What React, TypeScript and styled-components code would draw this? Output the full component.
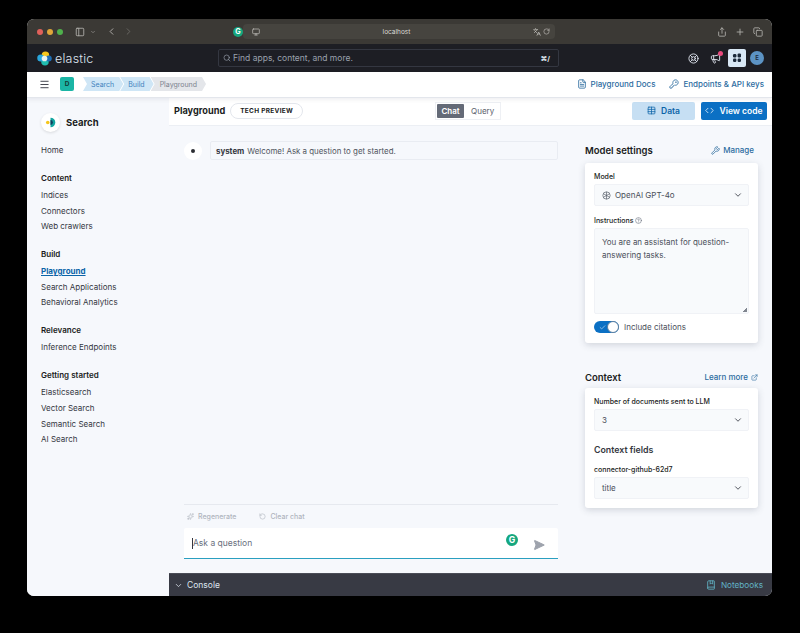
import React from "react";
import styled, { createGlobalStyle } from "styled-components";
import {
  BookMarked,
  ChevronDown,
  ChevronLeft,
  ChevronRight,
  Code,
  Copy,
  ExternalLink,
  FileText,
  Search as SearchIcon,
  HelpCircle,
  KeyRound,
  LifeBuoy,
  Megaphone,
  Menu,
  PanelLeft,
  Plus,
  RotateCw,
  RotateCcw,
  Languages,
  Share,
  SendHorizontal,
  Sparkles,
  Table,
  Wrench,
  Check,
  Monitor,
} from "lucide-react";

const GlobalStyle = createGlobalStyle`
  html, body {
    margin: 0;
    padding: 0;
    background: #000;
    font-family: Inter, "Liberation Sans", sans-serif;
    -webkit-font-smoothing: antialiased;
  }
`;

const Page = styled.div`
  width: 800px;
  height: 633px;
  box-sizing: border-box;
  padding: 19px 28px 37px 27px;
  background: #000;
  overflow: hidden;
`;

const Window = styled.div`
  height: 100%;
  display: flex;
  flex-direction: column;
  border-radius: 7px;
  overflow: hidden;
  background: #f6f8fc;
`;

const BrowserBar = styled.div`
  height: 25px;
  flex-shrink: 0;
  display: flex;
  align-items: center;
  padding: 0 9px 0 10px;
  background: #3b3935;
  color: #b6b4b0;
`;

const Dot = styled.span<{ $color: string }>`
  width: 6px;
  height: 6px;
  border-radius: 50%;
  margin-right: 4px;
  background: ${(p) => p.$color};
`;

const BarIcons = styled.div`
  display: flex;
  align-items: center;
  gap: 5px;
  margin-left: 8px;
  width: 158px;
`;

const AddressIcons = styled.div`
  display: flex;
  align-items: center;
  gap: 2px;
`;

const AddressBar = styled.div`
  width: 312px;
  height: 15px;
  margin-left: 0;
  padding: 0 5px 0 9px;
  box-sizing: border-box;
  display: flex;
  align-items: center;
  justify-content: space-between;
  border-radius: 4px;
  background: #46443f;
  color: #c9c7c3;
`;

const AddressText = styled.span`
  font-size: 6.5px;
  color: #dddbd7;
`;

const GrammarlyBadge = styled.span<{ $size: number }>`
  display: block;
  width: ${(p) => p.$size}px;
  height: ${(p) => p.$size}px;
  flex-shrink: 0;
  border-radius: 50%;
  background: #15a77f;
  color: #fff;
  font-size: ${(p) => p.$size * 0.72}px;
  font-weight: 700;
  line-height: ${(p) => p.$size}px;
  text-align: center;
`;

const BarRight = styled.div`
  margin-left: auto;
  display: flex;
  gap: 8px;
  align-items: center;
`;

const NavBar = styled.div`
  height: 28px;
  flex-shrink: 0;
  display: flex;
  align-items: center;
  padding: 0 8px 0 10px;
  background: #1d1e24;
`;

const Brand = styled.div`
  width: 181px;
  display: flex;
  align-items: center;
  gap: 3px;
  color: #dfe5ef;
  font-size: 12.5px;
  font-weight: 300;
  letter-spacing: 0.2px;
`;

const GlobalSearch = styled.div`
  width: 341px;
  height: 18px;
  box-sizing: border-box;
  padding: 0 8px 0 4px;
  display: flex;
  align-items: center;
  gap: 2px;
  border: 1px solid #343741;
  border-radius: 2px;
  color: #9aa1ad;
  font-size: 8.5px;
`;

const Shortcut = styled.span`
  margin-left: auto;
  color: #dfe5ef;
  font-size: 7px;
  font-weight: 700;
`;

const NavRight = styled.div`
  margin-left: auto;
  display: flex;
  align-items: center;
  color: #dfe5ef;
`;

const NotifyWrap = styled.span`
  position: relative;
  display: flex;
  margin-left: 11px;
`;

const NotifyDot = styled.span`
  position: absolute;
  top: -2px;
  right: -2px;
  width: 5px;
  height: 5px;
  border-radius: 50%;
  background: #e8487c;
`;

const AppsButton = styled.span`
  width: 18px;
  height: 18px;
  margin-left: 7px;
  display: grid;
  place-items: center;
  border-radius: 2px;
  background: #d9e8f5;
`;

const Avatar = styled.span`
  width: 14px;
  height: 14px;
  margin-left: 4px;
  border-radius: 50%;
  background: #5c93c4;
  color: #1d2a3a;
  font-size: 6px;
  font-weight: 600;
  line-height: 14px;
  text-align: center;
`;

const CrumbBar = styled.div`
  height: 26px;
  flex-shrink: 0;
  display: flex;
  align-items: center;
  padding: 0 8px 1px 12px;
  background: #fff;
  border-bottom: 1px solid #e3e6ec;
  box-shadow: 0 2px 4px rgba(60, 70, 90, 0.08);
  box-sizing: border-box;
  position: relative;
  z-index: 1;
`;

const SpaceBadge = styled.span`
  width: 14px;
  height: 14px;
  margin-left: 10px;
  margin-right: 9px;
  border-radius: 2px;
  background: #1bb5a5;
  color: #143a36;
  font-size: 6.5px;
  font-weight: 700;
  line-height: 14px;
  text-align: center;
`;

const Crumb = styled.span<{ $current?: boolean }>`
  height: 14px;
  margin-right: -3px;
  padding: 0 9px 0 ${(p) => (p.$current ? 9 : 8)}px;
  display: flex;
  align-items: center;
  font-size: 7px;
  color: ${(p) => (p.$current ? "#7b828e" : "#3f83bd")};
  background: ${(p) => (p.$current ? "#e4e6ea" : "#cfe6f6")};
  clip-path: polygon(
    0 0,
    calc(100% - 4px) 0,
    100% 50%,
    calc(100% - 4px) 100%,
    0 100%,
    4px 50%
  );
`;

const CrumbLinks = styled.div`
  margin-left: auto;
  display: flex;
  gap: 14px;
`;

const HeaderLink = styled.a`
  display: flex;
  align-items: center;
  gap: 4px;
  color: #2c6c9f;
  font-size: 8px;
  font-weight: 500;
`;

const Body = styled.div`
  flex: 1;
  min-height: 0;
  display: flex;
`;

const Sidebar = styled.nav`
  width: 142px;
  flex-shrink: 0;
  box-sizing: border-box;
  padding: 14px 0 0 14px;
  background: #f6f8fc;
`;

const SideHead = styled.div`
  height: 20px;
  display: flex;
  align-items: center;
  gap: 6px;
  margin-bottom: 11px;
  font-size: 9.5px;
  font-weight: 700;
  color: #1a1c21;
`;

const SideLogo = styled.span`
  width: 19px;
  height: 19px;
  display: grid;
  place-items: center;
  border-radius: 50%;
  background: #fff;
  box-shadow: 0 1px 3px rgba(0, 0, 0, 0.12);
`;

const SideSection = styled.div`
  margin-bottom: 12.4px;
`;

const SideTitle = styled.div`
  height: 15px;
  margin-bottom: 2px;
  line-height: 15px;
  font-size: 8px;
  font-weight: 600;
  color: #1a1c21;
`;

const SideItem = styled.div<{ $active?: boolean }>`
  height: 15.6px;
  line-height: 15.6px;
  font-size: 8px;
  color: ${(p) => (p.$active ? "#0b64a8" : "#343741")};
  font-weight: ${(p) => (p.$active ? 700 : 400)};
  text-decoration: ${(p) => (p.$active ? "underline" : "none")};
`;

const Main = styled.main`
  flex: 1;
  min-width: 0;
  display: flex;
  flex-direction: column;
`;

const PageHeader = styled.div`
  height: 28px;
  flex-shrink: 0;
  display: flex;
  align-items: center;
  padding: 0 5px 2px 5px;
  box-sizing: border-box;
  background: #fff;
  border-bottom: 1px solid #eceff4;
`;

const PageTitle = styled.h1`
  margin: 0;
  font-size: 9.2px;
  font-weight: 700;
  color: #1a1c21;
`;

const PreviewBadge = styled.span`
  height: 14px;
  margin-left: 5px;
  padding: 0 9px;
  display: flex;
  align-items: center;
  border: 1px solid #e3e6ec;
  border-radius: 8px;
  font-size: 6.5px;
  font-weight: 700;
  letter-spacing: 0.3px;
  color: #1a1c21;
`;

const ModeSwitch = styled.div`
  margin-left: 132px;
  padding: 1px 6px 1px 1px;
  display: flex;
  align-items: center;
  gap: 7px;
  border: 1px solid #eef0f4;
  font-size: 8px;
`;

const ModeActive = styled.span`
  width: 27px;
  height: 14px;
  border-radius: 1px;
  background: #646a77;
  color: #fff;
  font-weight: 600;
  line-height: 14px;
  text-align: center;
`;

const ModeOther = styled.span`
  color: #5a606b;
`;

const HeaderActions = styled.div`
  margin-left: auto;
  display: flex;
  gap: 6px;
`;

const ActionButton = styled.button<{ $primary?: boolean }>`
  height: 18px;
  width: ${(p) => (p.$primary ? 66 : 63)}px;
  padding: 0;
  display: flex;
  align-items: center;
  justify-content: center;
  gap: 5px;
  border: 0;
  border-radius: 2px;
  font-family: inherit;
  font-size: 8.5px;
  font-weight: 600;
  color: ${(p) => (p.$primary ? "#fff" : "#0b64a8")};
  background: ${(p) => (p.$primary ? "#0b70c4" : "#c6dff3")};
`;

const Content = styled.div`
  flex: 1;
  min-height: 0;
  display: flex;
`;

const ChatColumn = styled.section`
  width: 389px;
  flex-shrink: 0;
  box-sizing: border-box;
  padding: 15px 0 14px 15px;
  display: flex;
  flex-direction: column;
`;

const Message = styled.div`
  flex: 1;
`;

const MessageRow = styled.div`
  display: flex;
  align-items: center;
  gap: 8px;
  height: 19px;
`;

const BotAvatar = styled.span`
  width: 18px;
  height: 18px;
  flex-shrink: 0;
  display: grid;
  place-items: center;
  border-radius: 50%;
  background: #fff;
  &::after {
    content: "";
    width: 4px;
    height: 4px;
    border-radius: 50%;
    background: #2b2d33;
  }
`;

const Bubble = styled.div`
  flex: 1;
  height: 19px;
  box-sizing: border-box;
  padding-left: 5px;
  display: flex;
  align-items: center;
  gap: 3px;
  border: 1px solid #e9ecf2;
  border-radius: 2px;
  font-size: 7.9px;
  color: #4f5560;
  b {
    font-weight: 700;
    color: #343741;
  }
`;

const ChatFooter = styled.div`
  border-top: 1px solid #e6e9ef;
`;

const ChatActions = styled.div`
  height: 23px;
  display: flex;
  align-items: center;
  gap: 23px;
  padding-left: 3px;
`;

const GhostAction = styled.span`
  display: flex;
  align-items: center;
  gap: 4px;
  font-size: 7px;
  font-weight: 500;
  color: #b0b5be;
`;

const AskBox = styled.div`
  height: 31px;
  box-sizing: border-box;
  padding: 0 13px 0 8px;
  display: flex;
  align-items: center;
  background: #fff;
  border-bottom: 1px solid #2a9fc0;
  border-radius: 2px 2px 0 0;
  color: #69707d;
  font-size: 8.5px;
`;

const Caret = styled.span`
  width: 1px;
  height: 11px;
  background: #343741;
`;

const AskIcons = styled.div`
  margin-left: auto;
  padding-top: 3px;
  display: flex;
  gap: 15px;
  color: #9ea3ad;
`;

const AskGrammarly = styled.span`
  margin-top: -5px;
`;

const SettingsColumn = styled.aside`
  width: 173px;
  margin-left: 27px;
  flex-shrink: 0;
  padding-top: 15px;
`;

const SectionHead = styled.div`
  height: 18px;
  margin-bottom: 4px;
  display: flex;
  align-items: center;
  justify-content: space-between;
  padding-right: 4px;
`;

const ContextHead = styled(SectionHead)`
  margin-top: 24px;
  margin-bottom: 1px;
  padding-right: 0;
  height: 20px;
`;

const SectionTitle = styled.h2`
  margin: 0;
  font-size: 9.5px;
  font-weight: 600;
  color: #1a1c21;
`;

const SectionLink = styled.a`
  display: flex;
  align-items: center;
  gap: 3px;
  font-size: 8px;
  font-weight: 500;
  color: #2c6c9f;
`;

const Card = styled.div`
  box-sizing: border-box;
  padding: 8px 9px 9px;
  background: #fff;
  border-radius: 3px;
  box-shadow: 0 2px 7px rgba(60, 70, 90, 0.2);
`;

const FieldLabel = styled.div`
  display: flex;
  align-items: center;
  gap: 1px;
  height: 10px;
  margin-bottom: 3px;
  font-size: 7px;
  font-weight: 500;
  color: #1a1c21;
`;

const SelectBox = styled.div<{ $mb?: number }>`
  height: 22px;
  box-sizing: border-box;
  padding: 0 5px 0 7px;
  display: flex;
  align-items: center;
  gap: 4px;
  margin-bottom: ${(p) => p.$mb ?? 0}px;
  background: #f8fafc;
  border: 1px solid #f0f2f6;
  border-radius: 2px;
  font-size: 8px;
  color: #4a4f5a;
`;

const SelectCaret = styled.span`
  margin-left: auto;
  display: flex;
  color: #343741;
`;

const Instructions = styled.div`
  position: relative;
  height: 86px;
  box-sizing: border-box;
  padding: 7px 7px;
  margin-bottom: 7px;
  background: #f8fafc;
  border: 1px solid #f0f2f6;
  border-radius: 2px;
  font-size: 8px;
  line-height: 13px;
  color: #4a4f5a;
`;

const ResizeGrip = styled.span`
  position: absolute;
  right: 1px;
  bottom: 1px;
  width: 4px;
  height: 4px;
  background: linear-gradient(135deg, transparent 50%, #80858f 50%);
`;

const ToggleRow = styled.div`
  display: flex;
  align-items: center;
  gap: 5px;
  padding-bottom: 1px;
  font-size: 8px;
  color: #4a4f5a;
`;

const Toggle = styled.span`
  position: relative;
  width: 25px;
  height: 12px;
  border-radius: 6px;
  background: #0b70c4;
  color: #dfeefa;
  display: flex;
  align-items: center;
  padding-left: 5px;
  box-sizing: border-box;
`;

const ToggleKnob = styled.span`
  position: absolute;
  right: 0;
  top: 0;
  width: 12px;
  height: 12px;
  box-sizing: border-box;
  border-radius: 50%;
  border: 1px solid #5c7fa0;
  background: #fff;
`;

const SubTitle = styled.div`
  margin: 14px 0 9px;
  line-height: 10px;
  font-size: 8.8px;
  font-weight: 600;
  color: #343741;
`;

const ConsoleBar = styled.div`
  height: 23px;
  flex-shrink: 0;
  padding: 0 9px 0 5px;
  display: flex;
  align-items: center;
  justify-content: space-between;
  background: #383a44;
  border-top: 1px solid #4b4d57;
  box-sizing: border-box;
`;

const ConsoleToggle = styled.span`
  display: flex;
  align-items: center;
  gap: 4px;
  color: #dfe5ef;
  font-size: 8.5px;
`;

const NotebooksLink = styled.span`
  display: flex;
  align-items: center;
  gap: 5px;
  color: #62b3c4;
  font-size: 8.2px;
`;

const ElasticLogo = () => (
  <svg width="15" height="15" viewBox="0 0 32 32">
    <circle cx="18" cy="9" r="8" fill="#f5c61c" />
    <circle cx="17" cy="23" r="8" fill="#20bdb0" />
    <circle cx="8" cy="15" r="7.5" fill="#29a6dc" />
    <circle cx="25" cy="16" r="6.5" fill="#1f6fb5" />
    <circle cx="16" cy="16" r="6" fill="#e7f3f0" />
  </svg>
);

const SearchLogo = () => (
  <svg width="11" height="11" viewBox="0 0 16 16">
    <circle cx="4" cy="8" r="2.6" fill="#f5c61c" />
    <path d="M8 1a7 7 0 0 1 0 14z" fill="#12a5a0" />
    <path d="M8 4.5a3.5 3.5 0 0 1 0 7z" fill="#10405f" />
  </svg>
);

const OpenAiIcon = () => (
  <svg width="9" height="9" viewBox="0 0 16 16" fill="none" stroke="#5f6570" strokeWidth="1.3">
    <circle cx="8" cy="8" r="6.5" />
    <path d="M8 1.5v13M2.4 4.8l11.2 6.4M13.6 4.8 2.4 11.2" />
  </svg>
);

const AppsGrid = () => (
  <svg width="10" height="10" viewBox="0 0 10 10" fill="#1d2a3a">
    <rect x="1" y="1" width="3.4" height="3.4" rx="1.2" />
    <rect x="5.6" y="0.4" width="3.4" height="4" rx="1.2" />
    <rect x="1" y="5.6" width="3.4" height="3.4" rx="1.2" />
    <rect x="5.6" y="5.6" width="3.4" height="3.4" rx="1.2" />
  </svg>
);

const sideSections = [
  { title: "Content", items: ["Indices", "Connectors", "Web crawlers"] },
  { title: "Build", items: ["Playground", "Search Applications", "Behavioral Analytics"] },
  { title: "Relevance", items: ["Inference Endpoints"] },
  { title: "Getting started", items: ["Elasticsearch", "Vector Search", "Semantic Search", "AI Search"] },
];

export default function App() {
  return (
    <Page>
      <GlobalStyle />
      <Window>
        <BrowserBar>
          <Dot $color="#e0605a" />
          <Dot $color="#e0a63a" />
          <Dot $color="#4fb14c" />
          <BarIcons>
            <PanelLeft size={10} />
            <ChevronDown size={6} />
            <ChevronLeft size={11} style={{ marginLeft: 5 }} />
            <ChevronRight size={11} style={{ marginLeft: 1, opacity: 0.4 }} />
          </BarIcons>
          <GrammarlyBadge $size={10}>G</GrammarlyBadge>
          <AddressBar>
            <Monitor size={8} />
            <AddressText>localhost</AddressText>
            <AddressIcons>
              <Languages size={8} />
              <RotateCw size={7} />
            </AddressIcons>
          </AddressBar>
          <BarRight>
            <Share size={10} />
            <Plus size={10} />
            <Copy size={10} />
          </BarRight>
        </BrowserBar>

        <NavBar>
          <Brand>
            <ElasticLogo />
            elastic
          </Brand>
          <GlobalSearch>
            <SearchIcon size={8} />
            Find apps, content, and more.
            <Shortcut>⌘/</Shortcut>
          </GlobalSearch>
          <NavRight>
            <LifeBuoy size={11} />
            <NotifyWrap>
              <Megaphone size={11} />
              <NotifyDot />
            </NotifyWrap>
            <AppsButton>
              <AppsGrid />
            </AppsButton>
            <Avatar>E</Avatar>
          </NavRight>
        </NavBar>

        <CrumbBar>
          <Menu size={11} color="#343741" />
          <SpaceBadge>D</SpaceBadge>
          <Crumb>Search</Crumb>
          <Crumb>Build</Crumb>
          <Crumb $current>Playground</Crumb>
          <CrumbLinks>
            <HeaderLink>
              <FileText size={10} />
              Playground Docs
            </HeaderLink>
            <HeaderLink>
              <KeyRound size={10} />
              Endpoints &amp; API keys
            </HeaderLink>
          </CrumbLinks>
        </CrumbBar>

        <Body>
          <Sidebar>
            <SideHead>
              <SideLogo>
                <SearchLogo />
              </SideLogo>
              Search
            </SideHead>
            <SideSection>
              <SideItem>Home</SideItem>
            </SideSection>
            {sideSections.map((section) => (
              <SideSection key={section.title}>
                <SideTitle>{section.title}</SideTitle>
                {section.items.map((item) => (
                  <SideItem key={item} $active={item === "Playground"}>
                    {item}
                  </SideItem>
                ))}
              </SideSection>
            ))}
          </Sidebar>

          <Main>
            <PageHeader>
              <PageTitle>Playground</PageTitle>
              <PreviewBadge>TECH PREVIEW</PreviewBadge>
              <ModeSwitch>
                <ModeActive>Chat</ModeActive>
                <ModeOther>Query</ModeOther>
              </ModeSwitch>
              <HeaderActions>
                <ActionButton>
                  <Table size={9} />
                  Data
                </ActionButton>
                <ActionButton $primary>
                  <Code size={9} />
                  View code
                </ActionButton>
              </HeaderActions>
            </PageHeader>

            <Content>
              <ChatColumn>
                <Message>
                  <MessageRow>
                    <BotAvatar />
                    <Bubble>
                      <b>system</b> Welcome! Ask a question to get started.
                    </Bubble>
                  </MessageRow>
                </Message>
                <ChatFooter>
                  <ChatActions>
                    <GhostAction>
                      <Sparkles size={7} />
                      Regenerate
                    </GhostAction>
                    <GhostAction>
                      <RotateCcw size={7} />
                      Clear chat
                    </GhostAction>
                  </ChatActions>
                  <AskBox>
                    <Caret />
                    Ask a question
                    <AskIcons>
                      <AskGrammarly>
                        <GrammarlyBadge $size={12}>G</GrammarlyBadge>
                      </AskGrammarly>
                      <SendHorizontal size={12} fill="#9ea3ad" />
                    </AskIcons>
                  </AskBox>
                </ChatFooter>
              </ChatColumn>

              <SettingsColumn>
                <SectionHead>
                  <SectionTitle>Model settings</SectionTitle>
                  <SectionLink>
                    <Wrench size={9} />
                    Manage
                  </SectionLink>
                </SectionHead>
                <Card>
                  <FieldLabel>Model</FieldLabel>
                  <SelectBox $mb={9}>
                    <OpenAiIcon />
                    OpenAI GPT-4o
                    <SelectCaret>
                      <ChevronDown size={10} />
                    </SelectCaret>
                  </SelectBox>
                  <FieldLabel>
                    Instructions
                    <HelpCircle size={7} color="#69707d" />
                  </FieldLabel>
                  <Instructions>
                    You are an assistant for question-answering tasks.
                    <ResizeGrip />
                  </Instructions>
                  <ToggleRow>
                    <Toggle>
                      <Check size={7} />
                      <ToggleKnob />
                    </Toggle>
                    Include citations
                  </ToggleRow>
                </Card>

                <ContextHead>
                  <SectionTitle>Context</SectionTitle>
                  <SectionLink>
                    Learn more
                    <ExternalLink size={7} />
                  </SectionLink>
                </ContextHead>
                <Card>
                  <FieldLabel>Number of documents sent to LLM</FieldLabel>
                  <SelectBox>
                    3
                    <SelectCaret>
                      <ChevronDown size={10} />
                    </SelectCaret>
                  </SelectBox>
                  <SubTitle>Context fields</SubTitle>
                  <FieldLabel>connector-github-62d7</FieldLabel>
                  <SelectBox>
                    title
                    <SelectCaret>
                      <ChevronDown size={10} />
                    </SelectCaret>
                  </SelectBox>
                </Card>
              </SettingsColumn>
            </Content>

            <ConsoleBar>
              <ConsoleToggle>
                <ChevronDown size={9} />
                Console
              </ConsoleToggle>
              <NotebooksLink>
                <BookMarked size={10} />
                Notebooks
              </NotebooksLink>
            </ConsoleBar>
          </Main>
        </Body>
      </Window>
    </Page>
  );
}
